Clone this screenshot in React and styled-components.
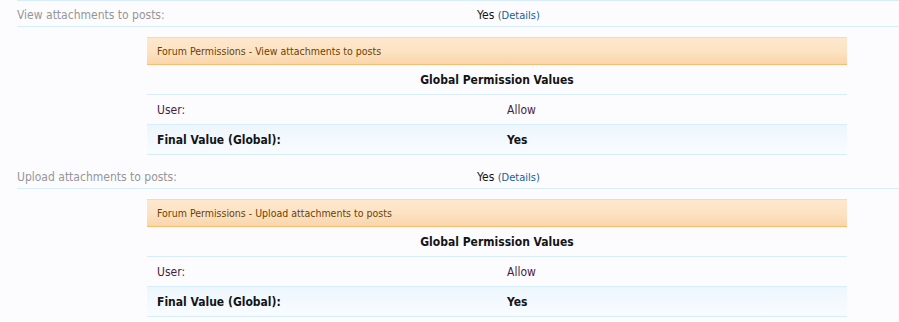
import styled, { createGlobalStyle } from "styled-components"

const GlobalStyle = createGlobalStyle`
    html, body {
        margin: 0;
        padding: 0;
        background: #fcfcff;
        overflow: hidden;
    }
    body {
        font-family: "DejaVu Sans Condensed", "DejaVu Sans", sans-serif;
        font-size: 12px;
        color: #141414;
    }
`

const permissions = [
    { key: "view", title: "View attachments to posts", user: "Allow", final: "Yes" },
    { key: "upload", title: "Upload attachments to posts", user: "Allow", final: "Yes" },
]

const App = () => {
    return (
        <Page>
            <GlobalStyle />
            <List>
                {permissions.map((p) => (
                    <Section key={p.key}>
                        <Row>
                            <Label>{p.title}:</Label>
                            <Value>
                                {p.final} <Details href="#">(Details)</Details>
                            </Value>
                        </Row>
                        <Panel>
                            <PanelHeader>Forum Permissions - {p.title}</PanelHeader>
                            <PanelHeading>Global Permission Values</PanelHeading>
                            <PanelRow>
                                <Cell>User:</Cell>
                                <Cell>{p.user}</Cell>
                            </PanelRow>
                            <PanelRow $final>
                                <Cell>Final Value (Global):</Cell>
                                <Cell>{p.final}</Cell>
                            </PanelRow>
                        </Panel>
                    </Section>
                ))}
            </List>
        </Page>
    )
}

export default App

const Page = styled.div`
    padding-left: 17px;
`

const List = styled.div`
    border-top: 1px solid #d7edfc;
    padding-top: 2px;
`

const Section = styled.div`
    padding-bottom: 10px;
`

const Row = styled.div`
    display: flex;
    align-items: center;
    height: 23px;
    border-bottom: 1px solid #d7edfc;
`

const Label = styled.div`
    width: 460px;
    color: #969696;
    font-size: 12px;
`

const Value = styled.div`
    color: #141414;
    font-size: 12px;
`

const Details = styled.a`
    color: #176093;
    font-size: 11px;
    text-decoration: none;
`

const Panel = styled.div`
    margin: 10px 0 0 130px;
    width: 700px;
`

const PanelHeader = styled.div`
    height: 26px;
    display: flex;
    align-items: center;
    padding-left: 10px;
    font-size: 10.5px;
    color: #6d3f03;
    background: linear-gradient(to bottom, #fee7cd 0%, #fde3c4 50%, #f9d5ab 100%);
    border-top: 1px solid #f9d9b0;
    border-bottom: 1px solid #f9bc6d;
`

const PanelHeading = styled.div`
    height: 29px;
    display: flex;
    align-items: center;
    justify-content: center;
    font-weight: bold;
    font-size: 12px;
    color: #141414;
    border-bottom: 1px solid #d7edfc;
`

const PanelRow = styled.div`
    height: 29px;
    display: grid;
    grid-template-columns: 350px 1fr;
    align-items: center;
    padding-left: 10px;
    border-bottom: 1px solid #d7edfc;
    font-size: 12px;
    font-weight: ${(p) => (p.$final ? "bold" : "normal")};
    color: ${(p) => (p.$final ? "#141414" : "#4a1d3b")};
    background: ${(p) => (p.$final ? "linear-gradient(to bottom, #edf6fd, #f9fcff)" : "transparent")};
`

const Cell = styled.div``
